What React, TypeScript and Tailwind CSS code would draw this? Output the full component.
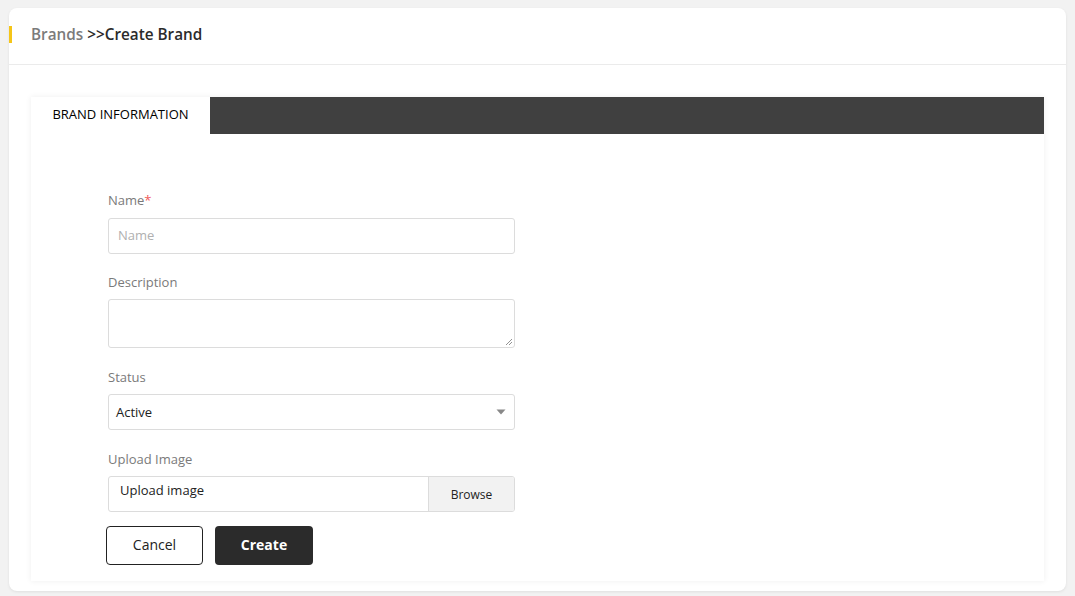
import React from "react";

export default function App() {
  return (
    <div className="min-h-[596px] w-full bg-[#f2f2f2] pt-[8px] pl-[9px] pr-[9px] pb-[5px]" style={{ fontFamily: '"Open Sans", "Liberation Sans", sans-serif' }}>
      <div className="bg-white rounded-[8px] shadow-[0_1px_3px_rgba(0,0,0,0.08)] h-[583px] flex flex-col">
        <div className="h-[57px] border-b border-[#ebebeb] flex items-center relative">
          <div className="absolute left-0 top-[18px] w-[3px] h-[17px] bg-[#f5c518]" />
          <div className="pl-[22px] text-[15.3px] font-semibold leading-none pb-[2px]">
            <span className="text-[#7b7b7b]">Brands</span>
            <span className="text-[#2b2b2b]"> &gt;&gt;Create Brand</span>
          </div>
        </div>
        <div className="pt-[32px] pl-[22px] pr-[22px]">
          <div className="bg-white shadow-[0_0_6px_rgba(0,0,0,0.07)] h-[484px] flex flex-col">
            <div className="h-[37px] bg-[#404040] flex">
              <div className="w-[179px] bg-white flex items-center justify-center text-[13px] font-medium text-black pb-[2px]">
                BRAND INFORMATION
              </div>
            </div>
            <div className="pl-[77px] pt-[57px] w-[484px]">
              <div className="text-[13px] text-[#7a7a7a] leading-[18px]">
                Name<span className="text-[#f05a5a]">*</span>
              </div>
              <div className="mt-[9px] h-[36px] border border-[#dcdcdc] rounded-[3px] flex items-center px-[9px] text-[13px] text-[#b0b0b0]">
                Name
              </div>
              <div className="mt-[19px] text-[13px] text-[#7a7a7a] leading-[18px]">Description</div>
              <div className="mt-[8px] h-[49px] border border-[#dcdcdc] rounded-[3px] relative">
                <svg className="absolute right-[1px] bottom-[1px]" width="8" height="8" viewBox="0 0 8 8">
                  <line x1="1" y1="7" x2="7" y2="1" stroke="#777" strokeWidth="0.8" />
                  <line x1="4" y1="7" x2="7" y2="4" stroke="#777" strokeWidth="0.8" />
                </svg>
              </div>
              <div className="mt-[20px] text-[13px] text-[#7a7a7a] leading-[18px]">Status</div>
              <div className="mt-[8px] h-[36px] border border-[#dcdcdc] rounded-[3px] flex items-center justify-between pl-[7px] pr-[8px] pt-[2px] text-[13px] text-[#222]">
                <span>Active</span>
                <svg className="-mt-[2px]" width="10" height="6" viewBox="0 0 10 6">
                  <path d="M0.5 0.5 L9.5 0.5 L5 5.5 Z" fill="#888" />
                </svg>
              </div>
              <div className="mt-[20px] text-[13px] text-[#7a7a7a] leading-[18px]">Upload Image</div>
              <div className="mt-[8px] h-[36px] border border-[#dcdcdc] rounded-[3px] flex overflow-hidden">
                <div className="flex-1 pl-[11px] pt-[4px] text-[13px] text-[#222]">Upload image</div>
                <div className="w-[86px] bg-[#f2f2f2] border-l border-[#dcdcdc] flex items-center justify-center text-[12px] text-[#222] pt-[2px]">
                  Browse
                </div>
              </div>
              <div className="mt-[14px] flex gap-[12px] -ml-[2px]">
                <div className="w-[97px] h-[39px] border border-[#222] rounded-[4px] flex items-center justify-center text-[14px] font-medium text-[#222] pb-[2px]">
                  Cancel
                </div>
                <div className="w-[98px] h-[39px] bg-[#2b2b2b] rounded-[4px] flex items-center justify-center text-[14px] font-bold text-white pb-[2px]">
                  Create
                </div>
              </div>
            </div>
          </div>
        </div>
      </div>
    </div>
  );
}
